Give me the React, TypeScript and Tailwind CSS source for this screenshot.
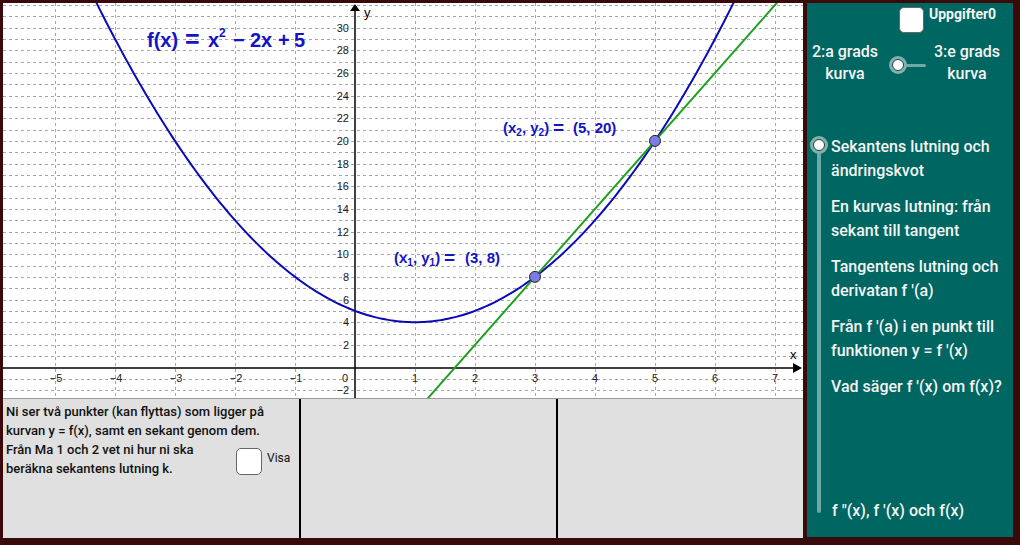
import React from 'react'

const X0 = 355
const Y0 = 367.5
const UX = 60
const UY = 11.33
const px = (x: number) => X0 + x * UX
const py = (y: number) => Y0 - y * UY

const BLUE = '#1414c4'
const CURVE = '#0a0ab8'
const GREEN = '#20a020'

function curvePath() {
  const pts: string[] = []
  for (let x = -4.45; x <= 6.45; x += 0.05) {
    const y = x * x - 2 * x + 5
    pts.push(`${px(x).toFixed(2)},${py(y).toFixed(2)}`)
  }
  return 'M' + pts.join(' L')
}

function Graph() {
  const xs = [-5, -4, -3, -2, -1, 1, 2, 3, 4, 5, 6, 7]
  const hs: number[] = []
  for (let v = -2; v <= 32; v++) if (v !== 0) hs.push(v)
  const yl: number[] = []
  for (let v = 2; v <= 30; v += 2) yl.push(v)

  return (
    <svg width="800" height="395" viewBox="3 3 800 395" className="block bg-white">
      <defs>
        <clipPath id="plot">
          <rect x="3" y="3" width="800" height="395" />
        </clipPath>
      </defs>
      <g fontFamily="'Liberation Sans', Arial, sans-serif" clipPath="url(#plot)">
        {/* grid */}
        {xs.map((k) => (
          <line key={'v' + k} x1={px(k) + 0.5} x2={px(k) + 0.5} y1="3" y2="398" stroke="#a6a6a6" strokeDasharray="3 3" />
        ))}
        {hs.map((v) => (
          <line key={'h' + v} x1="3" x2="803" y1={Math.round(py(v)) + 0.5} y2={Math.round(py(v)) + 0.5} stroke="#a6a6a6" strokeDasharray="3 3" />
        ))}

        {/* axes */}
        <line x1="355" x2="355" y1="8" y2="398" stroke="#000" strokeWidth="1.5" />
        <line x1="3" x2="796" y1="368" y2="368" stroke="#000" strokeWidth="1.5" />
        <polygon points="355,4 350,11 360,11" fill="#000" />
        <polygon points="802,368 793,363 793,373" fill="#000" />
        <text x="364" y="17" fontSize="13" fill="#000">y</text>
        <text x="790" y="359" fontSize="13" fill="#000">x</text>

        {yl.map((v) => (
          <text key={'yl' + v} x="349" y={py(v) + 4} fontSize="11" textAnchor="end" fill="#222">
            {v}
          </text>
        ))}
        <text x="349" y={py(-2) + 4} fontSize="11" textAnchor="end" fill="#222">−2</text>
        <text x="348" y="382" fontSize="11" textAnchor="end" fill="#222">0</text>
        {xs.map((k) => (
          <text key={'xl' + k} x={px(k) + (k < 0 ? 1 : 0)} y="382" fontSize="11" textAnchor="middle" fill="#222">
            {k < 0 ? '−' + -k : k}
          </text>
        ))}

        {/* curve and secant */}
        <path d={curvePath()} fill="none" stroke={CURVE} strokeWidth="2" />
        <line x1={px(1.2)} y1={py(6 * 1.2 - 10)} x2={px(7.1)} y2={py(6 * 7.1 - 10)} stroke={GREEN} strokeWidth="2" />

        <circle cx={px(3)} cy={py(8)} r="5.5" fill="#7b7ce6" stroke="#222" strokeWidth="1" />
        <circle cx={px(5)} cy={py(20)} r="5.5" fill="#7b7ce6" stroke="#222" strokeWidth="1" />

        {/* formula */}
        <g fill={BLUE} fontWeight="bold" fontSize="20">
          <text x="147" y="47">f(x)</text>
          <text x="185" y="48" fontSize="25">=</text>
          <text x="208" y="47">x</text>
          <text x="219" y="37" fontSize="12">2</text>
          <text x="233" y="47">−</text>
          <text x="250" y="47">2x</text>
          <text x="278" y="47">+</text>
          <text x="294" y="47">5</text>
        </g>

        <g fill={BLUE} fontWeight="bold" fontSize="15">
          <text x="503" y="133">
            (x<tspan fontSize="10" dy="3">2</tspan>
            <tspan dy="-3">, y</tspan>
            <tspan fontSize="10" dy="3">2</tspan>
            <tspan dy="-3">)</tspan>
          </text>
          <text x="553" y="134" fontSize="19">=</text>
          <text x="573" y="133">(5, 20)</text>

          <text x="394" y="263">
            (x<tspan fontSize="10" dy="3">1</tspan>
            <tspan dy="-3">, y</tspan>
            <tspan fontSize="10" dy="3">1</tspan>
            <tspan dy="-3">)</tspan>
          </text>
          <text x="444" y="264" fontSize="19">=</text>
          <text x="465" y="263">(3, 8)</text>
        </g>
      </g>
    </svg>
  )
}

function Checkbox({ className = '' }: { className?: string }) {
  return <div className={'bg-white border border-[#666] rounded-[5px] ' + className} />
}

function Knob() {
  return <div className="w-[12px] h-[12px] rounded-full bg-white border border-[#2a3b3a] ring-[3px] ring-[#7fb2ae]" />
}

function BottomPanels() {
  return (
    <div className="flex h-[140px] border-t border-[#9a9a9a]">
      <div className="w-[296px] bg-[#e0e0e0] pl-[3px] pt-[3px] text-[13px] font-medium leading-[19px] text-[#111]">
        <p>Ni ser två punkter (kan flyttas) som ligger på</p>
        <p>kurvan y = f(x), samt en sekant genom dem.</p>
        <div className="flex items-center">
          <p className="w-[230px]">
            Från Ma 1 och 2 vet ni hur ni ska
            <br />
            beräkna sekantens lutning k.
          </p>
          <Checkbox className="w-[26px] h-[27px] mt-[4px]" />
          <span className="ml-[5px] text-[12px] font-normal -mt-[1px]">Visa</span>
        </div>
      </div>
      <div className="w-[2px] bg-black" />
      <div className="w-[255px] bg-[#e0e0e0]" />
      <div className="w-[2px] bg-black" />
      <div className="w-[245px] bg-[#e0e0e0]" />
    </div>
  )
}

const topics = [
  ['Sekantens lutning och', 'ändringskvot'],
  ['En kurvas lutning: från', 'sekant till tangent'],
  ['Tangentens lutning och', "derivatan f '(a)"],
  ["Från f '(a) i en punkt till", "funktionen y = f '(x)"],
  ["Vad säger f '(x) om f(x)?"],
]

function Sidebar() {
  return (
    <div className="w-[206px] h-[534px] bg-[#006661] text-[#f4f4f4]">
      <div className="flex items-start pl-[92px] pt-[4px] gap-[5px]">
        <Checkbox className="w-[25px] h-[26px]" />
        <span className="text-[14px] font-bold leading-[16px] -mt-[1px]">Uppgifter0</span>
      </div>

      <div className="flex items-center mt-[8px] text-[16px] font-medium leading-[22px]">
        <div className="w-[76px] text-center">
          2:a grads
          <br />
          kurva
        </div>
        <div className="relative ml-[9px] w-[34px] h-[14px] mt-[4px]">
          <div className="absolute left-[7px] right-0 top-[5.5px] h-[3px] bg-[#6fa9a5] rounded-sm" />
          <div className="absolute left-0 top-[1px]">
            <Knob />
          </div>
        </div>
        <div className="ml-[4px] w-[74px] text-center">
          3:e grads
          <br />
          kurva
        </div>
      </div>

      <div className="flex mt-[50px] h-[388px]">
        <div className="relative w-[24px]">
          <div className="absolute left-[10px] w-[4px] top-[11px] bottom-[10px] bg-[#6fa9a5] rounded-b-full" />
          <div className="absolute left-[6px] top-[4px]">
            <Knob />
          </div>
        </div>
        <div className="flex flex-col gap-[12px] text-[16px] font-medium leading-[24px]">
          {topics.map((t) => (
            <div key={t[0]}>
              {t.map((line) => (
                <p key={line}>{line}</p>
              ))}
            </div>
          ))}
          <p className="mt-auto pl-[1px]">f "(x), f '(x) och f(x)</p>
        </div>
      </div>
    </div>
  )
}

export default function App() {
  return (
    <div
      className="w-[1020px] h-[545px] bg-[#3a0a0a] pt-[3px] pl-[3px] flex gap-[4px] overflow-hidden"
      style={{ fontFamily: 'Roboto, "Liberation Sans", Arial, sans-serif' }}
    >
      <div className="w-[800px] flex flex-col">
        <Graph />
        <BottomPanels />
      </div>
      <Sidebar />
    </div>
  )
}
